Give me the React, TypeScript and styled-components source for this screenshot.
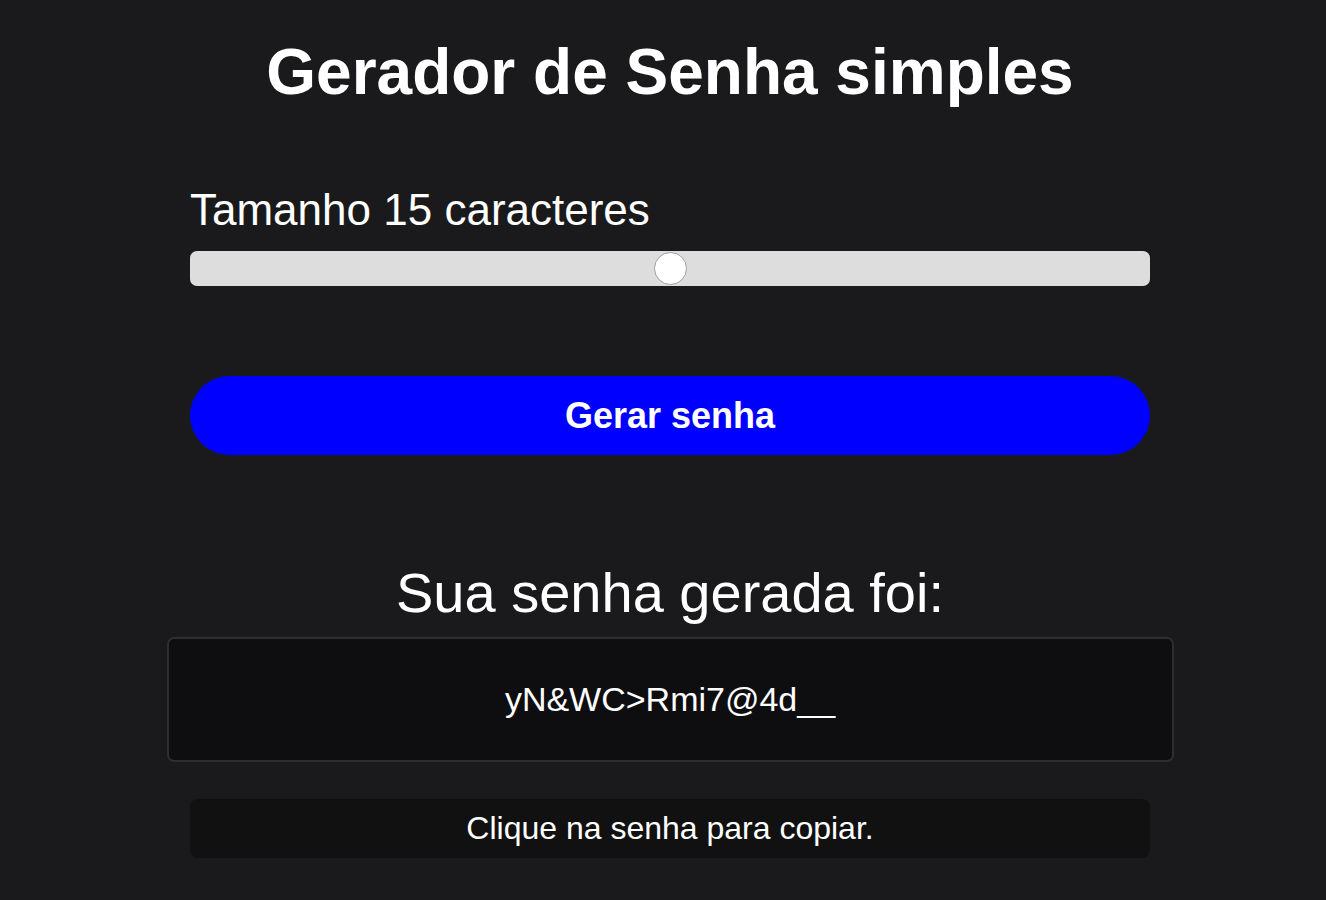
import { useState } from 'react'
import styled, { createGlobalStyle } from 'styled-components'

const GlobalStyle = createGlobalStyle`
  body {
    margin: 0;
    background: #1a1a1c;
    color: #ffffff;
    font-family: 'Liberation Sans', Arial, Helvetica, sans-serif;
  }
`

const Page = styled.main`
  box-sizing: border-box;
  min-height: 100vh;
  padding-left: 14px;
  display: flex;
  flex-direction: column;
  align-items: center;
`

const Title = styled.h1`
  margin: 36px 0 0;
  font-size: 64px;
  line-height: 72px;
  font-weight: 700;
`

const Controls = styled.section`
  width: 960px;
  display: flex;
  flex-direction: column;
`

const Label = styled.label`
  margin-top: 77px;
  font-size: 44px;
  line-height: 50px;
`

const Range = styled.input`
  appearance: none;
  -webkit-appearance: none;
  margin: 16px 0 0;
  width: 100%;
  height: 35px;
  border-radius: 7px;
  background: #dddddd;
  outline: none;

  &::-webkit-slider-thumb {
    -webkit-appearance: none;
    width: 33px;
    height: 33px;
    border-radius: 50%;
    background: #ffffff;
    border: 1px solid #a0a0a0;
    cursor: pointer;
  }
`

const Button = styled.button`
  margin-top: 90px;
  height: 79px;
  border: none;
  border-radius: 40px;
  background: #0000ff;
  color: #ffffff;
  font-family: inherit;
  font-size: 36px;
  font-weight: 700;
  cursor: pointer;
`

const Result = styled.section`
  margin-top: 106px;
  display: flex;
  flex-direction: column;
  align-items: center;
`

const ResultTitle = styled.h2`
  margin: 0;
  font-size: 56px;
  line-height: 64px;
  font-weight: 400;
`

const PasswordBox = styled.div`
  box-sizing: border-box;
  margin-top: 12px;
  width: 1007px;
  height: 125px;
  display: flex;
  align-items: center;
  justify-content: center;
  background: #0e0e11;
  border: 2px solid #2e2e31;
  border-radius: 7px;
  font-size: 34px;
  cursor: pointer;
`

const Hint = styled.div`
  margin-top: 37px;
  width: 960px;
  height: 59px;
  display: flex;
  align-items: center;
  justify-content: center;
  background: #111111;
  border-radius: 8px;
  font-size: 32px;
`

const chars = 'abcdefghijklmnopqrstuvwxyzABCDEFGHIJKLMNOPQRSTUVWXYZ0123456789!@#$%&*_>'

const App = () => {
  const [size, setSize] = useState(15)
  const [password, setPassword] = useState('yN&WC>Rmi7@4d__')

  const generate = () => {
    let next = ''
    for (let i = 0; i < size; i++) {
      next += chars.charAt(Math.floor(Math.random() * chars.length))
    }
    setPassword(next)
  }

  return (
    <>
      <GlobalStyle />
      <Page>
        <Title>Gerador de Senha simples</Title>

        <Controls>
          <Label htmlFor="size">Tamanho {size} caracteres</Label>
          <Range
            id="size"
            type="range"
            min={6}
            max={24}
            value={size}
            onChange={(e) => setSize(Number(e.target.value))}
          />
          <Button onClick={generate}>Gerar senha</Button>
        </Controls>

        <Result>
          <ResultTitle>Sua senha gerada foi:</ResultTitle>
          <PasswordBox onClick={() => navigator.clipboard?.writeText(password)}>{password}</PasswordBox>
          <Hint>Clique na senha para copiar.</Hint>
        </Result>
      </Page>
    </>
  )
}

export default App
